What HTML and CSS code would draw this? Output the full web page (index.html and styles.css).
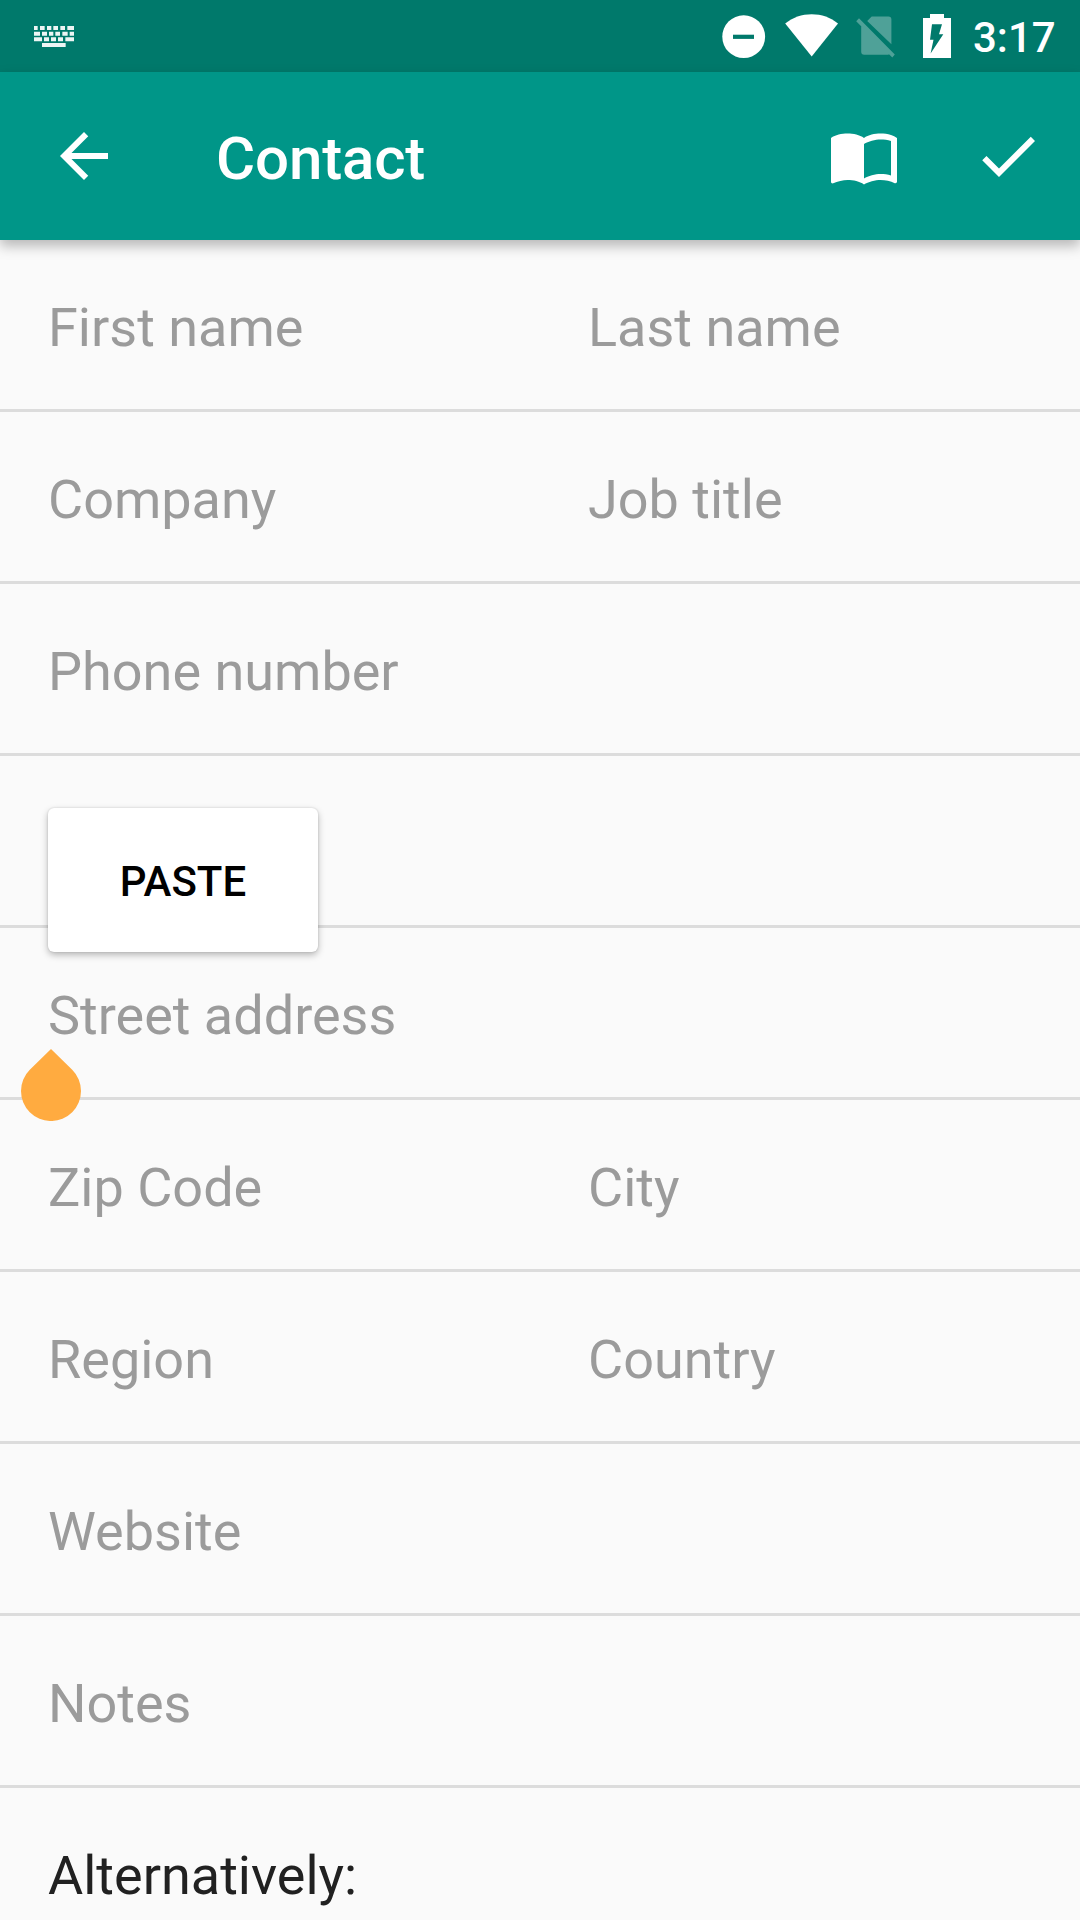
FILE: index.html
```html
<!DOCTYPE html>
<html lang="en">
<head>
<meta charset="utf-8">
<title>Contact</title>
<link rel="stylesheet" href="styles.css">
</head>
<body>
<div class="status-bar">
  <svg class="icon-keyboard" viewBox="99 72 126 72" fill="#fff">
    <path d="M102 78h11v12h-11zM120 78h14v12h-14zM141 78h13v12h-13zM160 78h14v12h-14zM181 78h14v12h-14zM202 78h20v12h-20zM102 95h18v12h-18zM126 95h15v12h-15zM147 95h13v12h-13zM166 95h14v12h-14zM187 95h16v12h-16zM209 95h13v12h-13zM102 112h24v12h-24zM132 112h15v12h-15zM153 112h15v12h-15zM174 112h15v12h-15zM196 112h26v12h-26zM126 129h71v12h-71z"/>
  </svg>
  <svg class="icon-dnd" viewBox="0 0 44 44"><circle cx="21.7" cy="21.7" r="21.4" fill="#fff"/><path d="M11 19.7h21v4.2H11z" fill="#00796b"/></svg>
  <svg class="icon-wifi" viewBox="0 0 54 44"><path d="M0.2 9.6C7.500 3.500 17 .3 26.700 .3S45.800 3.500 53 9.600L26.700 42.500z" fill="#fff"/></svg>
  <svg class="icon-sim" viewBox="0 0 40 44">
    <path d="M15.700 2.500H32.400a3 3 0 0 1 3 3V30.300L11.200 6.900zM5.200 11.900L33.300 40.200a3 3 0 0 1-1.400.5H8.200a3 3 0 0 1-3-3zM3 4.200L38.800 40.600 36.300 43.600.2 7.200z"/>
  </svg>
  <svg class="icon-battery" viewBox="0 0 28 44"><path fill="#fff" fill-rule="evenodd" d="M7 0H21V4H28V44H0V4H7zM9 10.300H19L16 20.300H20.300L7.600 39.500L10.500 25.700H7z"/></svg>
  <span class="clock">3:17</span>
</div>
<header class="app-bar">
  <svg class="icon" viewBox="0 0 24 24"><path d="M20 11H7.830l5.590-5.590L12 4l-8 8 8 8 1.410-1.410L7.830 13H20v-2z"/></svg>
  <h1 class="title">Contact</h1>
  <svg class="icon" viewBox="0 0 24 24"><path d="M21 5c-1.110-.35-2.330-.5-3.500-.5-1.950 0-4.050.4-5.500 1.500-1.450-1.100-3.550-1.500-5.500-1.500S2.450 4.900 1 6v14.650c0 .25.25.5.5.5.1 0 .15-.05.25-.05C3.100 20.450 5.050 20 6.500 20c1.950 0 4.050.4 5.500 1.500 1.350-.85 3.800-1.500 5.500-1.500 1.650 0 3.350.3 4.750 1.050.1.050.15.050.25.050.25 0 .5-.25.5-.5V6c-.6-.45-1.250-.75-2-1zm0 13.500c-1.100-.35-2.300-.5-3.500-.5-1.700 0-4.150.65-5.500 1.500V8c1.350-.85 3.800-1.500 5.500-1.500 1.200 0 2.400.15 3.500.5v11.500z"/></svg>
  <svg class="icon" viewBox="0 0 24 24"><path d="M9 16.170L4.830 12l-1.420 1.410L9 19 21 7l-1.410-1.410z"/></svg>
</header>
<main class="form">
  <div class="row"><span class="field">First name</span><span class="field">Last name</span></div>
  <div class="row"><span class="field">Company</span><span class="field">Job title</span></div>
  <div class="row"><span class="field">Phone number</span></div>
  <div class="row"></div>
  <div class="row"><span class="field">Street address</span></div>
  <div class="row"><span class="field">Zip Code</span><span class="field">City</span></div>
  <div class="row"><span class="field">Region</span><span class="field">Country</span></div>
  <div class="row"><span class="field">Website</span></div>
  <div class="row"><span class="field">Notes</span></div>
  <div class="row row-label"><span class="field">Alternatively:</span></div>
</main>
<div class="paste-menu">PASTE</div>
<svg class="cursor-handle" viewBox="0 0 60 72"><path d="M30 0L8.800 20.800A30 30 0 1 0 51.200 20.800z" fill="#ffab40"/></svg>
</body>
</html>
```

FILE: styles.css
```css
* { box-sizing: border-box; }

body {
  margin: 0;
  width: 1080px;
  height: 1920px;
  overflow: hidden;
  position: relative;
  background: #fafafa;
  font-family: Roboto, "Liberation Sans", sans-serif;
}

svg { display: block; flex: none; }

.status-bar {
  display: flex;
  align-items: flex-start;
  height: 72px;
  padding: 14px 25px 0 33px;
  background: #00796b;
}

.icon-keyboard { width: 42px; height: 24px; margin: 10px auto 0 0; opacity: 0.93; }
.icon-dnd { width: 44px; height: 44px; margin: 1px 19px 0 0; }
.icon-wifi { width: 54px; height: 44px; margin-right: 17px; }
.icon-sim { width: 40px; height: 44px; margin-right: 27px; fill: #4fa198; }
.icon-battery { width: 28px; height: 44px; margin-right: 22px; }

.clock {
  width: 82px;
  color: #fff;
  font-size: 42px;
  font-weight: 500;
  line-height: 48px;
  white-space: nowrap;
}

.app-bar {
  position: relative;
  display: flex;
  align-items: center;
  height: 168px;
  padding: 0 36px 0 48px;
  background: #009688;
  box-shadow: 0 6px 12px rgba(0, 0, 0, 0.27);
}

.icon { width: 72px; height: 72px; fill: #fff; }
.icon:last-child { margin-left: 72px; }

.title {
  flex: 1;
  margin: 0 0 0 96px;
  padding-top: 6px;
  color: #fff;
  font-size: 60px;
  font-weight: 500;
  line-height: 72px;
  letter-spacing: -0.15px;
}

.form { display: flex; flex-direction: column; }

.row {
  display: grid;
  grid-template-columns: 1fr 1fr;
  align-items: center;
  height: 172px;
  padding-top: 7px;
  border-bottom: 3px solid #dcdcdc;
}

.field {
  padding-left: 48px;
  color: #9b9b9b;
  font-size: 54px;
  line-height: 64px;
  white-space: nowrap;
}

.row-label { border-bottom: 0; padding-bottom: 3px; }
.row-label .field { color: #212121; }

.paste-menu {
  position: absolute;
  left: 48px;
  top: 808px;
  width: 270px;
  height: 144px;
  padding-top: 3px;
  border-radius: 6px;
  background: #fff;
  box-shadow: 0 3px 7px rgba(0, 0, 0, 0.27), 0 0 2px rgba(0, 0, 0, 0.16);
  color: #000;
  font-size: 42px;
  font-weight: 500;
  line-height: 141px;
  text-align: center;
}

.cursor-handle {
  position: absolute;
  left: 21px;
  top: 1049px;
  width: 60px;
  height: 72px;
}
```
